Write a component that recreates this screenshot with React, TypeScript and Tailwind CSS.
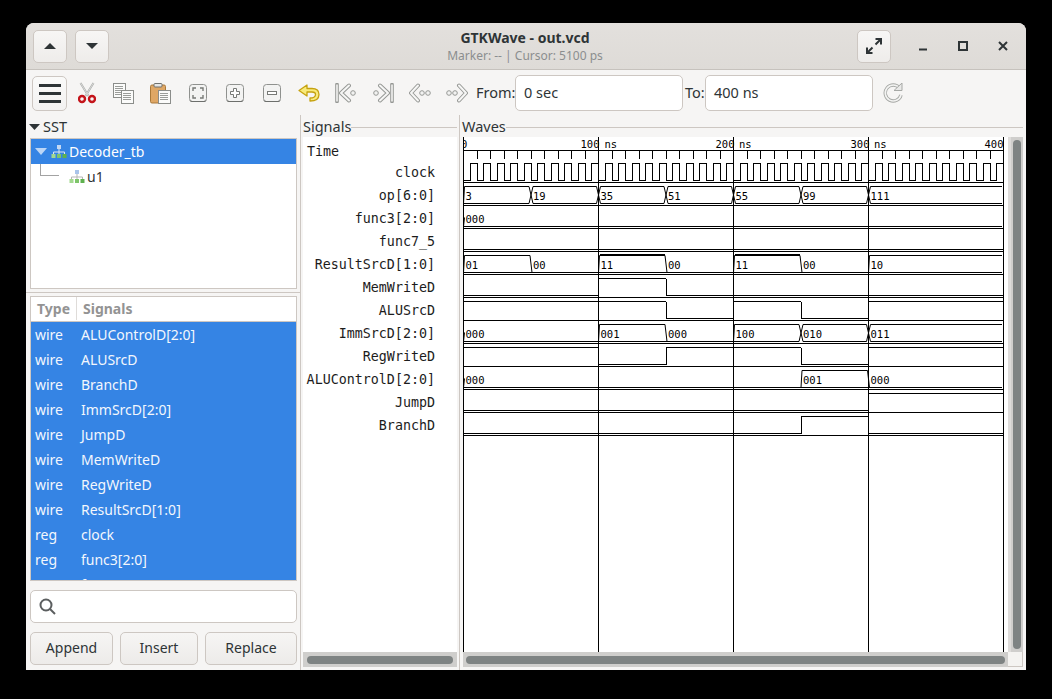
import type { ReactNode } from "react";

const UI = "font-['Noto_Sans',sans-serif]";
const MONO = "font-['DejaVu_Sans_Mono',monospace]";

const SIGNAL_NAMES = [
  "clock",
  "op[6:0]",
  "func3[2:0]",
  "func7_5",
  "ResultSrcD[1:0]",
  "MemWriteD",
  "ALUSrcD",
  "ImmSrcD[2:0]",
  "RegWriteD",
  "ALUControlD[2:0]",
  "JumpD",
  "BranchD",
];

const SEARCH_ROWS = [
  ["wire", "ALUControlD[2:0]"],
  ["wire", "ALUSrcD"],
  ["wire", "BranchD"],
  ["wire", "ImmSrcD[2:0]"],
  ["wire", "JumpD"],
  ["wire", "MemWriteD"],
  ["wire", "RegWriteD"],
  ["wire", "ResultSrcD[1:0]"],
  ["reg", "clock"],
  ["reg", "func3[2:0]"],
  ["reg", "func7_5"],
];

// wave canvas starts at x=463 on the page, 1.35px per ns
const X0 = 0.5;
const tx = (ns: number) => X0 + ns * 1.35;
const sepY = (row: number) => 45 + row * 23;

type BusSeg = [number, number, string];
type BitSeg = [number, number, 0 | 1];

const BUSES: Record<number, { zero: string; segs: BusSeg[] }> = {
  1: {
    zero: "",
    segs: [
      [0, 50, "3"],
      [50, 100, "19"],
      [100, 150, "35"],
      [150, 200, "51"],
      [200, 250, "55"],
      [250, 300, "99"],
      [300, 400, "111"],
    ],
  },
  2: { zero: "000", segs: [[0, 400, "000"]] },
  4: {
    zero: "00",
    segs: [
      [0, 50, "01"],
      [50, 100, "00"],
      [100, 150, "11"],
      [150, 200, "00"],
      [200, 250, "11"],
      [250, 300, "00"],
      [300, 400, "10"],
    ],
  },
  7: {
    zero: "000",
    segs: [
      [0, 100, "000"],
      [100, 150, "001"],
      [150, 200, "000"],
      [200, 250, "100"],
      [250, 300, "010"],
      [300, 400, "011"],
    ],
  },
  9: {
    zero: "000",
    segs: [
      [0, 250, "000"],
      [250, 300, "001"],
      [300, 400, "000"],
    ],
  },
};

const BITS: Record<number, BitSeg[]> = {
  3: [[0, 400, 0]],
  5: [
    [0, 100, 0],
    [100, 150, 1],
    [150, 400, 0],
  ],
  6: [
    [0, 150, 1],
    [150, 200, 0],
    [200, 250, 1],
    [250, 300, 0],
    [300, 400, 1],
  ],
  8: [
    [0, 100, 1],
    [100, 150, 0],
    [150, 250, 1],
    [250, 300, 0],
    [300, 400, 1],
  ],
  10: [
    [0, 300, 0],
    [300, 400, 1],
  ],
  11: [
    [0, 250, 0],
    [250, 300, 1],
    [300, 400, 0],
  ],
};

function busPath(row: number, segs: BusSeg[], zero: string) {
  const S = sepY(row);
  const top = S - 19;
  const bot = S - 2;
  const out: ReactNode[] = [];
  segs.forEach(([a, b, label], i) => {
    const isZero = label === zero;
    const prev = i > 0 ? segs[i - 1][2] : null;
    const next = i < segs.length - 1 ? segs[i + 1][2] : null;
    const xa = tx(a);
    const xb = Math.min(tx(b), 540);
    let d = "";
    // horizontals stop short of the crossing only where both lines cross
    const topStart = prev === null ? xa + 1 : prev === zero ? xa + 1 : xa + 2;
    const topEnd = next === null ? xb - 1 : next === zero ? xb - 1 : xb - 2;
    const botStart = prev === null || prev === zero || isZero ? xa : xa + 2;
    const botEnd = next === null ? xb - 1 : next === zero || isZero ? xb : xb - 2;
    d += `M${botStart} ${bot}H${botEnd}`;
    if (!isZero) d += `M${topStart} ${top}H${topEnd}`;
    if (prev === null) {
      d += isZero ? `M${xa} ${bot}L${xa + 1} ${bot - 9}` : `M${xa} ${bot}L${xa + 1} ${top}`;
    } else if (!isZero && prev === zero) {
      d += `M${xa} ${bot}L${xa + 1} ${top}`;
    } else if (isZero && prev !== zero) {
      d += `M${xa - 1} ${top}L${xa + 1} ${bot}`;
    } else if (!isZero && prev !== zero) {
      d += `M${xa - 2} ${top}L${xa + 2} ${bot}M${xa - 2} ${bot}L${xa + 2} ${top}`;
    }
    out.push(<path key={`p${i}`} d={d} stroke="#000" fill="none" />);
    out.push(
      <text key={`t${i}`} x={xa + 2} y={S - 6} fontSize="10.5" fill="#000" className={MONO}>
        {label}
      </text>
    );
  });
  return out;
}

function bitPath(row: number, segs: BitSeg[]) {
  const S = sepY(row);
  let d = "";
  segs.forEach(([a, b, v], i) => {
    const y = v ? S - 19 : S - 2;
    d += `M${tx(a)} ${y}H${Math.min(tx(b), 540)}`;
    if (i > 0 && segs[i - 1][2] !== v) d += `M${tx(a)} ${S - 19}V${S - 2}`;
  });
  return <path d={d} stroke="#000" fill="none" />;
}

function WaveCanvas() {
  let clock = `M${tx(0)} ${sepY(0) - 2}`;
  for (let ns = 5; ns < 400; ns += 5) {
    const high = Math.round(ns / 5) % 2 === 1;
    clock += `H${tx(ns)}V${sepY(0) - (high ? 19 : 2)}`;
  }
  clock += `H${tx(400)}`;

  let ticks = "";
  for (let ns = 10; ns < 400; ns += 10) {
    if (ns % 100) ticks += `M${Math.round(tx(ns) - 0.5) + 0.5} 13V22`;
  }

  const rows = [1, 2, 4, 7, 9];

  return (
    <svg width="545" height="515" viewBox="0 0 545 515" shapeRendering="crispEdges" className="block bg-white">
      <path d="M0.5 13H540.5" stroke="#000" fill="none" />
      <path d={ticks} stroke="#000" fill="none" />
      {[0, 135, 270, 405, 540].map((x) => (
        <path key={x} d={`M${x + 0.5} 0V515`} stroke="#000" fill="none" />
      ))}
      {SIGNAL_NAMES.map((_, i) => (
        <path key={i} d={`M0 ${sepY(i) + 0.5}H541`} stroke="#000" fill="none" />
      ))}
      <path d={clock} transform="translate(0 0.5)" stroke="#000" fill="none" />
      <g transform="translate(0 0.5)">
        {Object.entries(BITS).map(([row, segs]) => (
          <g key={row}>{bitPath(Number(row), segs)}</g>
        ))}
      </g>
      <g transform="translate(0 0.5)" shapeRendering="auto">
        {rows.map((r) => (
          <g key={r}>{busPath(r, BUSES[r].segs, BUSES[r].zero)}</g>
        ))}
      </g>
      {/* all-ones bus values get the heavy top line */}
      <path d={`M${tx(100) + 1} ${sepY(4) - 19.5}H${tx(150) - 1}M${tx(200) + 1} ${sepY(4) - 19.5}H${tx(250) - 1}`} stroke="#000" fill="none" />
      <g className={MONO} fontSize="10.5" fill="#000" shapeRendering="auto">
        <text x="-2" y="11">0</text>
        <text x="117.5" y="11">100</text>
        <text x="141.5" y="11">ns</text>
        <text x="252.5" y="11">200</text>
        <text x="276" y="11">ns</text>
        <text x="387.5" y="11">300</text>
        <text x="411" y="11">ns</text>
        <text x="521.5" y="11">400</text>
      </g>
    </svg>
  );
}

function HierIcon({ dim }: { dim?: boolean }) {
  return (
    <svg width="16" height="16" viewBox="0 0 16 16" className="shrink-0">
      <rect x="6" y="1" width="4" height="4" fill={dim ? "#a9c4ea" : "#c4d8f3"} />
      <path d="M8 5v3M2.500 10V8h11v2M8 8v2" stroke={dim ? "#b5b5b5" : "#dfe6ee"} fill="none" />
      <rect x="0.500" y="10" width="4" height="4" fill="#a3d98f" />
      <rect x="6" y="10" width="4" height="4" fill="#7ec56a" />
      <rect x="11.500" y="10" width="4" height="4" fill="#5fb14e" />
    </svg>
  );
}

function Tool({ children }: { children: ReactNode }) {
  return <div className="flex h-[35px] w-[37px] items-center justify-center">{children}</div>;
}

function Scissors() {
  return (
    <svg width="18" height="22" viewBox="0 0 18 22">
      <path d="M2.500 1l8 13M15.500 1l-8 13" stroke="#a9abaa" strokeWidth="2" fill="none" />
      <path d="M2.500 1l8 13M15.500 1l-8 13" stroke="#e4e4e2" strokeWidth="0.800" fill="none" />
      <circle cx="4" cy="17" r="3" fill="none" stroke="#c4141a" strokeWidth="2.400" />
      <circle cx="14" cy="17" r="3" fill="none" stroke="#c4141a" strokeWidth="2.400" />
    </svg>
  );
}

function DocLines({ x, y, w, h }: { x: number; y: number; w: number; h: number }) {
  let d = "";
  for (let ly = y + 3.5; ly < y + h - 2; ly += 2) d += `M${x + 2} ${ly}H${x + w - 2}`;
  return (
    <g>
      <rect x={x + 0.5} y={y + 0.5} width={w} height={h} fill="#fbfbfa" stroke="#8b8d8a" />
      <path d={d} stroke="#9a9c99" fill="none" />
    </g>
  );
}

function CopyIcon() {
  return (
    <svg width="21" height="21" viewBox="0 0 21 21" shapeRendering="crispEdges">
      <DocLines x={0} y={0} w={12} h={14} />
      <DocLines x={8} y={7} w={12} h={13} />
    </svg>
  );
}

function PasteIcon() {
  return (
    <svg width="21" height="22" viewBox="0 0 21 22">
      <rect x="0.500" y="3" width="15" height="18" rx="1.500" fill="#dfa765" stroke="#a9793a" />
      <rect x="4" y="1.500" width="8" height="3.500" rx="1" fill="#e6e6e4" stroke="#6f716e" />
      <DocLines x={8} y={8} w={12} h={13} />
    </svg>
  );
}

function RoundTile({ children }: { children: ReactNode }) {
  return (
    <svg width="18" height="18" viewBox="0 0 18 18">
      <rect x="0.500" y="0.500" width="17" height="17" rx="3" fill="#f3f3f2" stroke="#8f918e" />
      <path d="M1 16.500Q1 17.500 3 17.500H15Q17 17.500 17 16.500" stroke="#6d6f6c" fill="none" />
      {children}
    </svg>
  );
}

function NavChevron({ dir, mark }: { dir: "left" | "right"; mark: "bar" | "dots" }) {
  // drawn pointing left, mirrored for the right-hand pair
  const chev = mark === "bar" ? "M14 2.500L6 10l8 7.500" : "M9 2.500L2 10l7 7.500";
  return (
    <svg width="22" height="20" viewBox="0 0 22 20">
      <g transform={dir === "right" ? "matrix(-1 0 0 1 22 0)" : undefined} fill="none">
        {mark === "bar" && <path d="M2 1.500V18.500" stroke="#969895" strokeWidth="3.600" strokeLinecap="round" />}
        {mark === "bar" && <path d="M2 1.500V18.500" stroke="#f4f4f3" strokeWidth="1.600" />}
        <path d={chev} stroke="#969895" strokeWidth="4" strokeLinejoin="round" strokeLinecap="round" />
        <path d={chev} stroke="#f6f6f5" strokeWidth="2" strokeLinejoin="round" strokeLinecap="round" />
        {mark === "bar" ? (
          <circle cx="18" cy="10" r="2.300" stroke="#969895" fill="#f2f2f1" />
        ) : (
          <>
            <circle cx="13" cy="10" r="2.300" stroke="#969895" fill="#f2f2f1" />
            <circle cx="19" cy="10" r="2.300" stroke="#969895" fill="#f2f2f1" />
          </>
        )}
      </g>
    </svg>
  );
}

function Btn({ w, label }: { w: string; label: string }) {
  return (
    <div
      className={`flex h-[33px] ${w} items-center justify-center rounded-[5px] border border-[#cdc7c2] bg-gradient-to-b from-[#f6f5f4] to-[#edebe9] pb-[3px] text-[14px] text-[#2e3436]`}
    >
      {label}
    </div>
  );
}

function HeadButton({ children }: { children: ReactNode }) {
  return (
    <div className="flex h-[33px] w-[34px] items-center justify-center rounded-[5px] border border-[#cdc7c2] bg-gradient-to-b from-[#f7f6f5] to-[#eeecea]">
      {children}
    </div>
  );
}

function ScrollH({ cls, thumb }: { cls: string; thumb: string }) {
  return (
    <div className={`flex h-[15px] items-center bg-[#cfcecc] ${cls}`}>
      <div className={`h-[8px] rounded-full bg-[#7e8383] ${thumb}`} />
    </div>
  );
}

export default function App() {
  return (
    <div className={`h-[699px] w-[1052px] overflow-hidden bg-black pl-[26px] pt-[23px] ${UI}`}>
      <div className="flex h-[647px] w-[1000px] flex-col overflow-hidden rounded-t-[8px] bg-[#f6f5f4] text-[#2e3436]">
        {/* Title bar */}
        <div className="flex h-[47px] shrink-0 items-center border-b border-[#c6c2bd] bg-gradient-to-b from-[#e3e0dd] to-[#dedbd7] pl-[7px]">
          <div className="flex w-[340px] gap-[8px]">
            <HeadButton>
              <svg width="12" height="6" viewBox="0 0 12 6">
                <path d="M0 6L6 0l6 6z" fill="#2e3436" />
              </svg>
            </HeadButton>
            <HeadButton>
              <svg width="12" height="6" viewBox="0 0 12 6">
                <path d="M0 0l6 6 6-6z" fill="#2e3436" />
              </svg>
            </HeadButton>
          </div>
          <div className="flex w-[304px] flex-col items-center leading-none">
            <div className="text-[14px] font-bold leading-[18px] text-[#2e3436]">GTKWave - out.vcd</div>
            <div className="text-[12px] leading-[17px] text-[#8b8e8f]">Marker: -- | Cursor: 5100 ps</div>
          </div>
          <div className="ml-[180px] flex items-center">
            <HeadButton>
              <svg width="16" height="16" viewBox="0 0 16 16" fill="none" stroke="#2e3436" strokeWidth="2">
                <path d="M9.500 1H15V6.500M15 1L9.500 6.500M1 9.500V15H6.500M1 15L6.500 9.500" />
              </svg>
            </HeadButton>
            <div className="ml-[27px] flex items-center gap-[30px]">
              <svg width="10" height="10" viewBox="0 0 10 10">
                <path d="M1 8.500H9" stroke="#2e3436" strokeWidth="2" />
              </svg>
              <svg width="10" height="10" viewBox="0 0 10 10">
                <rect x="1" y="1" width="8" height="8" fill="none" stroke="#2e3436" strokeWidth="2" />
              </svg>
              <svg width="10" height="10" viewBox="0 0 10 10">
                <path d="M1 1l8 8M9 1l-8 8" stroke="#2e3436" strokeWidth="2" />
              </svg>
            </div>
          </div>
        </div>

        {/* Toolbar */}
        <div className="flex h-[45px] shrink-0 items-center pl-[6px] pt-[1px]">
          <div className="flex h-[35px] w-[35px] flex-col items-center justify-center gap-[5px] rounded-[5px] border border-[#cdc7c2] bg-gradient-to-b from-[#fafaf9] to-[#f3f2f1]">
            <span className="h-[3px] w-[22px] bg-[#2e3436]" />
            <span className="h-[3px] w-[22px] bg-[#2e3436]" />
            <span className="h-[3px] w-[22px] bg-[#2e3436]" />
          </div>
          <div className="ml-[1px] flex items-center">
            <Tool><Scissors /></Tool>
            <Tool><CopyIcon /></Tool>
            <Tool><PasteIcon /></Tool>
            <Tool>
              <RoundTile>
                <path d="M4 7V4h3M11 4h3v3M14 11v3h-3M7 14H4v-3" stroke="#777976" strokeWidth="1.400" fill="none" />
              </RoundTile>
            </Tool>
            <Tool>
              <RoundTile>
                <path d="M7.500 4.500h3v3h3v3h-3v3h-3v-3h-3v-3h3z" stroke="#777976" fill="#fff" />
              </RoundTile>
            </Tool>
            <Tool>
              <RoundTile>
                <rect x="4.500" y="7.500" width="9" height="3" stroke="#777976" fill="#fff" />
              </RoundTile>
            </Tool>
            <Tool>
              <svg width="22" height="18" viewBox="0 0 22 18">
                <path
                  d="M1 6.500L9 1V4.500H14C18.500 4.500 21 7 21 10.500C21 14.500 17.500 17 12 17V14C15.500 14 17.500 12.500 17.500 10.500C17.500 9 16 8 14 8H9V12Z"
                  fill="#f8ea7a"
                  stroke="#c6a210"
                  strokeWidth="1.300"
                  strokeLinejoin="round"
                />
              </svg>
            </Tool>
            <Tool><NavChevron dir="left" mark="bar" /></Tool>
            <Tool><NavChevron dir="right" mark="bar" /></Tool>
            <Tool><NavChevron dir="left" mark="dots" /></Tool>
            <Tool><NavChevron dir="right" mark="dots" /></Tool>
          </div>
          <div className="ml-[1px] w-[39px] text-[14.500px]">From:</div>
          <div className="flex h-[36px] w-[168px] items-center rounded-[5px] border border-[#cdc7c2] bg-white pl-[8px] text-[14.500px]">0 sec</div>
          <div className="ml-[2px] w-[20px] text-[14.500px]">To:</div>
          <div className="flex h-[36px] w-[168px] items-center rounded-[5px] border border-[#cdc7c2] bg-white pl-[8px] text-[14.500px]">400 ns</div>
          <svg width="20" height="20" viewBox="0 0 20 20" className="ml-[10px]" fill="none">
            <path d="M16.500 5A8 8 0 1 0 18 12" stroke="#a6a8a5" strokeWidth="3.400" />
            <path d="M16.500 5A8 8 0 1 0 18 12" stroke="#f3f3f2" strokeWidth="1.600" />
            <path d="M11 7.500h8V0z" fill="#e9e9e8" stroke="#a6a8a5" />
          </svg>
        </div>

        {/* Panes */}
        <div className="flex min-h-0 flex-1">
          {/* Left column */}
          <div className="flex w-[274px] shrink-0 flex-col pl-[4px] pr-[3px]">
            <div className="flex h-[23px] shrink-0 items-center gap-[3px] text-[14.500px]">
              <svg width="11" height="6" viewBox="0 0 11 6" className="-ml-px">
                <path d="M0 0h11L5.500 6z" fill="#2e3436" />
              </svg>
              <span>SST</span>
            </div>
            <div className="h-[151px] shrink-0 border border-[#cdc7c2] bg-white text-[14px]">
              <div className="flex h-[25px] items-center bg-[#3584e4] pl-[4px] text-white">
                <svg width="12" height="7" viewBox="0 0 12 7" className="mr-[4px]">
                  <path d="M0 0h12L6 7z" fill="#bcd6f6" />
                </svg>
                <HierIcon />
                <span className="ml-[2px]">Decoder_tb</span>
              </div>
              <div className="relative flex h-[25px] items-center pl-[38px]">
                <span className="absolute left-[9px] top-0 h-[12px] w-[19px] border-b border-l border-[#a3a3a3]" />
                <HierIcon dim />
                <span className="ml-[2px]">u1</span>
              </div>
            </div>
            <div className="-ml-[4px] -mr-[3px] mb-[3px] mt-[3px] h-px shrink-0 bg-[#cdc7c2]" />
            <div className="flex h-[285px] shrink-0 flex-col overflow-hidden border border-[#cdc7c2] bg-white text-[14px]">
              <div className="flex h-[25px] shrink-0 items-center border-b border-[#cdc7c2] pb-[1px] font-bold text-[#939393]">
                <span className="flex h-full w-[46px] items-center border-r border-[#dfdcd9] pl-[6px]">Type</span>
                <span className="pl-[6px]">Signals</span>
              </div>
              <div className="min-h-0 flex-1 overflow-hidden bg-[#3584e4] text-[#f3f7fd]">
                {SEARCH_ROWS.map(([kind, name]) => (
                  <div key={name} className="flex h-[25px] items-center">
                    <span className="w-[50px] pl-[4px]">{kind}</span>
                    <span>{name}</span>
                  </div>
                ))}
              </div>
            </div>
            <div className="mt-[9px] flex h-[33px] shrink-0 items-center rounded-[5px] border border-[#cdc7c2] bg-white pl-[8px]">
              <svg width="17" height="17" viewBox="0 0 17 17" fill="none" stroke="#5b5e5f" strokeWidth="2">
                <circle cx="7" cy="7" r="5.500" />
                <path d="M11 11l5 5" />
              </svg>
            </div>
            <div className="mt-[9px] flex shrink-0 gap-[7px]">
              <Btn w="w-[83px]" label="Append" />
              <Btn w="w-[78px]" label="Insert" />
              <Btn w="w-[92px]" label="Replace" />
            </div>
          </div>

          {/* Signals */}
          <div className="flex w-[159px] shrink-0 flex-col border-l border-[#cdc7c2] pl-[2px] pr-[2px]">
            <div className="flex h-[22px] shrink-0 items-end">
              <span className="text-[14.500px] leading-[22px]">Signals</span>
              <span className="mb-[9px] h-px flex-1 bg-[#cdc7c2]" />
            </div>
            <div className={`flex min-h-0 flex-1 flex-col bg-white pr-[22px] pt-[3px] text-[13.330px] text-[#1c1c1c] ${MONO}`}>
              <div className="flex h-[23px] items-center pl-[4px]">Time</div>
              {SIGNAL_NAMES.map((n) => (
                <div key={n} className="-mt-[2px] mb-[2px] flex h-[23px] items-center justify-end">
                  {n}
                </div>
              ))}
            </div>
            <ScrollH cls="mb-[3px] px-[4px]" thumb="w-full" />
          </div>

          {/* Waves */}
          <div className="flex min-w-0 flex-1 flex-col border-l border-[#cdc7c2] pl-[3px] pr-[3px]">
            <div className="flex h-[22px] shrink-0 items-end">
              <span className="-ml-px text-[14.500px] leading-[22px]">Waves</span>
              <span className="mb-[9px] h-px flex-1 bg-[#cdc7c2]" />
            </div>
            <div className="flex shrink-0">
              <WaveCanvas />
              <div className="flex h-[515px] w-[15px] justify-center border-l-[3px] border-[#dedcda] bg-[#cfcecc] pr-[1px] pt-[3px]">
                <div className="h-[509px] w-[8px] rounded-full bg-[#7e8383]" />
              </div>
            </div>
            <div className="mb-[3px] flex shrink-0">
              <ScrollH cls="w-[545px] px-[3px]" thumb="w-full" />
              <div className="h-[15px] w-[15px] border-b border-r border-[#cdc7c2] bg-[#f4f3f1]" />
            </div>
          </div>
        </div>
      </div>
    </div>
  );
}
